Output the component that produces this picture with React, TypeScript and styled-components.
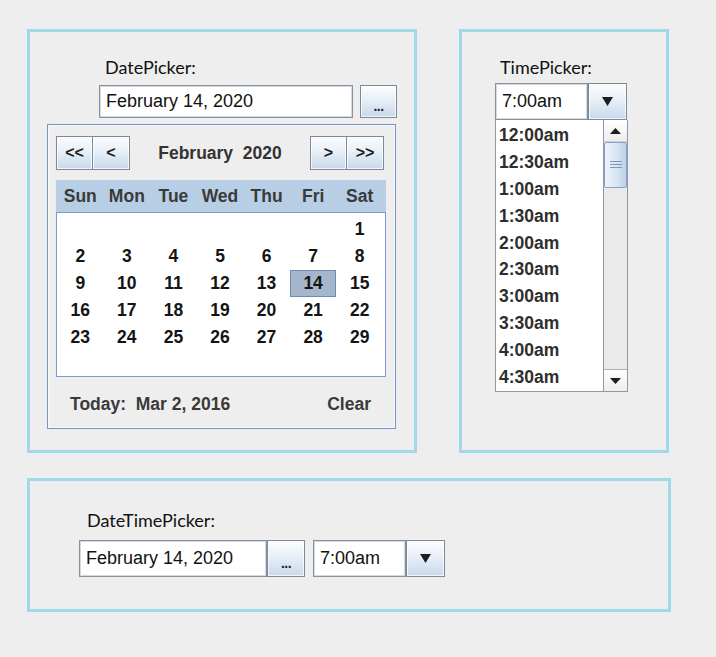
import React from "react";
import styled, { createGlobalStyle } from "styled-components";

const GlobalStyle = createGlobalStyle`
  html, body { margin: 0; padding: 0; background: #eeeeee; }
  body { font-family: "Liberation Sans", Arial, sans-serif; }
`;

const Page = styled.div`
  width: 716px;
  height: 657px;
  box-sizing: border-box;
  padding: 29px 0 0 27px;
  display: flex;
  flex-direction: column;
  gap: 25px;
`;

const TopRow = styled.div`
  display: flex;
  gap: 42px;
  align-items: flex-start;
`;

const Panel = styled.section<{ $w: number; $h: number }>`
  width: ${(p) => p.$w}px;
  height: ${(p) => p.$h}px;
  box-sizing: border-box;
  border: 3px solid #a1d9e9;
  display: flex;
  flex-direction: column;
  align-items: flex-start;
`;

const Label = styled.div<{ $left: number; $top: number }>`
  margin: ${(p) => p.$top}px 0 0 ${(p) => p.$left}px;
  font-family: Lato, "Liberation Sans", sans-serif;
  font-size: 18px;
  line-height: 22px;
  color: #111;
`;

const Row = styled.div<{ $left: number; $top: number; $gap: number }>`
  margin: ${(p) => p.$top}px 0 0 ${(p) => p.$left}px;
  display: flex;
  align-items: center;
  gap: ${(p) => p.$gap}px;
`;

const Combo = styled.div`
  display: flex;
  align-items: stretch;
`;

const Field = styled.div<{ $w: number; $h: number }>`
  width: ${(p) => p.$w}px;
  height: ${(p) => p.$h}px;
  box-sizing: border-box;
  background: #ffffff;
  border: 1px solid #86929f;
  box-shadow: inset 0 0 0 1px #d3d9df;
  display: flex;
  align-items: center;
  padding-left: 6px;
  font-family: "Liberation Sans", Arial, sans-serif;
  font-size: 18px;
  color: #111;
  white-space: nowrap;
`;

const GradButton = styled.div<{ $w: number; $h: number }>`
  width: ${(p) => p.$w}px;
  height: ${(p) => p.$h}px;
  box-sizing: border-box;
  border: 1px solid #7c8a98;
  background: linear-gradient(#fbfdff 0%, #e8eff8 45%, #c8d8eb 100%);
  box-shadow: inset 0 0 0 1px rgba(255, 255, 255, 0.75);
  display: flex;
  align-items: center;
  justify-content: center;
  font-family: "Liberation Sans", Arial, sans-serif;
  font-weight: bold;
  font-size: 16px;
  color: #1e1e1e;
  white-space: pre;
`;

const Dots = styled.span`
  font-size: 14px;
  font-weight: bold;
  letter-spacing: -0.5px;
  margin-top: 8px;
`;

const Popup = styled.div`
  margin: 6px 0 0 17px;
  width: 349px;
  height: 305px;
  box-sizing: border-box;
  border: 1px solid #7a93cb;
  box-shadow: inset 0 0 0 1px #f8f8f8;
  background: #eeeeee;
  padding: 11px 9px 0 8px;
  display: flex;
  flex-direction: column;
`;

const NavRow = styled.div`
  height: 34px;
  display: flex;
  align-items: stretch;
  padding-right: 2px;
`;

const NavGroup = styled.div`
  display: flex;
`;

const NavButton = styled(GradButton)`
  & + & {
    border-left: none;
  }
`;

const MonthTitle = styled.div`
  flex: 1;
  display: flex;
  align-items: center;
  justify-content: center;
  font-weight: bold;
  font-size: 17.5px;
  color: #333;
  white-space: pre;
`;

const DayHeader = styled.div`
  margin-top: 10px;
  height: 32px;
  background: #b8cee5;
  display: grid;
  grid-template-columns: repeat(7, 1fr);
  padding: 0 3px 0 1px;
  align-items: center;
`;

const HeadCell = styled.div`
  text-align: center;
  font-weight: bold;
  font-size: 17.5px;
  color: #3a3a3a;
`;

const DayGrid = styled.div`
  height: 165px;
  box-sizing: border-box;
  background: #ffffff;
  border: 1px solid #7e99d0;
  padding: 3px 2px 0 0;
  display: grid;
  grid-template-columns: repeat(7, 1fr);
  grid-auto-rows: 27px;
  align-content: start;
`;

const DayCell = styled.div<{ $sel?: boolean }>`
  display: flex;
  align-items: center;
  justify-content: center;
  box-sizing: border-box;
  font-weight: bold;
  font-size: 17.5px;
  color: #141414;
  background: ${(p) => (p.$sel ? "#a3b6cc" : "transparent")};
  border: 1px solid ${(p) => (p.$sel ? "#6e8db6" : "transparent")};
`;

const Footer = styled.div`
  flex: 1;
  display: flex;
  align-items: center;
  justify-content: space-between;
  padding: 3px 15px 0 14px;
  font-weight: bold;
  font-size: 17.5px;
  color: #3a3a3a;
  white-space: pre;
`;

const TimeList = styled.div`
  margin-left: 33px;
  width: 133px;
  height: 272px;
  box-sizing: border-box;
  border: 1px solid #8e99a5;
  border-top: none;
  background: #ffffff;
  display: flex;
`;

const Items = styled.div`
  flex: 1;
  display: flex;
  flex-direction: column;
  padding-top: 2px;
`;

const Item = styled.div`
  height: 27px;
  display: flex;
  align-items: center;
  padding-left: 3px;
  font-weight: bold;
  font-size: 17.5px;
  color: #2e2e2e;
`;

const ScrollBar = styled.div`
  width: 23px;
  border-left: 1px solid #8c98a5;
  background: #eaeaea;
  display: flex;
  flex-direction: column;
`;

const ScrollArrow = styled.div`
  height: 22px;
  box-sizing: border-box;
  background: linear-gradient(#ffffff, #ededed);
  border-bottom: 1px solid #d0d0d0;
  display: flex;
  align-items: center;
  justify-content: center;
`;

const ScrollArrowBottom = styled(ScrollArrow)`
  border-bottom: none;
  border-top: 1px solid #a9b3bd;
`;

const Track = styled.div`
  flex: 1;
  display: flex;
  flex-direction: column;
`;

const Thumb = styled.div`
  height: 46px;
  box-sizing: border-box;
  border: 1px solid #86a2cb;
  border-radius: 2px;
  background: linear-gradient(90deg, #f0f5fb, #d5e3f3 60%, #bcd0e8);
  display: flex;
  align-items: center;
  justify-content: center;
`;

const Tri = ({ dir, w = 11, h = 7 }: { dir: "up" | "down"; w?: number; h?: number }) => (
  <svg width={w} height={h} viewBox={`0 0 ${w} ${h}`}>
    {dir === "down" ? (
      <polygon points={`0,0 ${w},0 ${w / 2},${h}`} fill="#1e1e1e" />
    ) : (
      <polygon points={`0,${h} ${w},${h} ${w / 2},0`} fill="#1e1e1e" />
    )}
  </svg>
);

const Grip = () => (
  <svg width="12" height="8" viewBox="0 0 12 8">
    <rect x="0" y="0" width="12" height="1" fill="#7e97bb" />
    <rect x="0" y="3" width="12" height="1" fill="#7e97bb" />
    <rect x="0" y="6" width="12" height="1" fill="#7e97bb" />
  </svg>
);

const heads = ["Sun", "Mon", "Tue", "Wed", "Thu", "Fri", "Sat"];
const days: (number | null)[] = [null, null, null, null, null, null];
for (let d = 1; d <= 29; d++) days.push(d);

const times = [
  "12:00am",
  "12:30am",
  "1:00am",
  "1:30am",
  "2:00am",
  "2:30am",
  "3:00am",
  "3:30am",
  "4:00am",
  "4:30am",
];

export default function App() {
  return (
    <>
      <GlobalStyle />
      <Page>
        <TopRow>
          <Panel $w={390} $h={424}>
            <Label $left={75} $top={24}>DatePicker:</Label>
            <Row $left={69} $top={7} $gap={7}>
              <Field $w={254} $h={33}>February 14, 2020</Field>
              <GradButton $w={37} $h={33}>
                <Dots>...</Dots>
              </GradButton>
            </Row>
            <Popup>
              <NavRow>
                <NavGroup>
                  <NavButton $w={37} $h={34}>{"<<"}</NavButton>
                  <NavButton $w={37} $h={34}>{"<"}</NavButton>
                </NavGroup>
                <MonthTitle>{"February  2020"}</MonthTitle>
                <NavGroup>
                  <NavButton $w={37} $h={34}>{">"}</NavButton>
                  <NavButton $w={37} $h={34}>{">>"}</NavButton>
                </NavGroup>
              </NavRow>
              <DayHeader>
                {heads.map((h) => (
                  <HeadCell key={h}>{h}</HeadCell>
                ))}
              </DayHeader>
              <DayGrid>
                {days.map((d, i) => (
                  <DayCell key={i} $sel={d === 14}>
                    {d ?? ""}
                  </DayCell>
                ))}
              </DayGrid>
              <Footer>
                <span>{"Today:  Mar 2, 2016"}</span>
                <span>Clear</span>
              </Footer>
            </Popup>
          </Panel>
          <Panel $w={210} $h={424}>
            <Label $left={38} $top={24}>TimePicker:</Label>
            <Row $left={33} $top={5} $gap={0}>
              <Combo>
                <Field $w={93} $h={37}>7:00am</Field>
                <GradButton $w={39} $h={37}>
                  <Tri dir="down" w={11} h={9} />
                </GradButton>
              </Combo>
            </Row>
            <TimeList>
              <Items>
                {times.map((t) => (
                  <Item key={t}>{t}</Item>
                ))}
              </Items>
              <ScrollBar>
                <ScrollArrow>
                  <Tri dir="up" w={11} h={6} />
                </ScrollArrow>
                <Track>
                  <Thumb>
                    <Grip />
                  </Thumb>
                </Track>
                <ScrollArrowBottom>
                  <Tri dir="down" w={11} h={6} />
                </ScrollArrowBottom>
              </ScrollBar>
            </TimeList>
          </Panel>
        </TopRow>
        <Panel $w={644} $h={134}>
          <Label $left={57} $top={28}>DateTimePicker:</Label>
          <Row $left={49} $top={9} $gap={8}>
            <Combo>
              <Field $w={188} $h={37}>February 14, 2020</Field>
              <GradButton $w={38} $h={37}>
                <Dots>...</Dots>
              </GradButton>
            </Combo>
            <Combo>
              <Field $w={93} $h={37}>7:00am</Field>
              <GradButton $w={39} $h={37}>
                <Tri dir="down" w={11} h={9} />
              </GradButton>
            </Combo>
          </Row>
        </Panel>
      </Page>
    </>
  );
}
